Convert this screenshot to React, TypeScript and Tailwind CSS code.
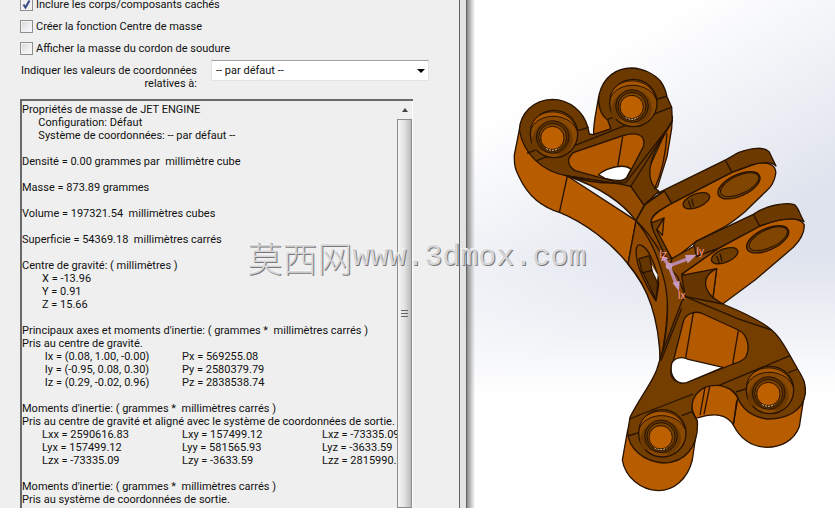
import { useState } from "react";

const options = [
  { id: "hidden", label: "Inclure les corps/composants cachés", on: true },
  { id: "center", label: "Créer la fonction Centre de masse", on: false },
  { id: "weld", label: "Afficher la masse du cordon de soudure", on: false },
];

const report = [
  "Propriétés de masse de JET ENGINE",
  "      Configuration: Défaut",
  "      Système de coordonnées: -- par défaut --",
  "",
  "Densité = 0.00 grammes par  millimètre cube",
  "",
  "Masse = 873.89 grammes",
  "",
  "Volume = 197321.54  millimètres cubes",
  "",
  "Superficie = 54369.18  millimètres carrés",
  "",
  "Centre de gravité: ( millimètres )",
  "\tX = -13.96",
  "\tY = 0.91",
  "\tZ = 15.66",
  "",
  "Principaux axes et moments d'inertie: ( grammes *  millimètres carrés )",
  "Pris au centre de gravité.",
  "\t Ix = (0.08, 1.00, -0.00)\t\tPx = 569255.08",
  "\t Iy = (-0.95, 0.08, 0.30)\t\tPy = 2580379.79",
  "\t Iz = (0.29, -0.02, 0.96)\t\tPz = 2838538.74",
  "",
  "Moments d'inertie: ( grammes *  millimètres carrés )",
  "Pris au centre de gravité et aligné avec le système de coordonnées de sortie.",
  "\tLxx = 2590616.83\t\t\tLxy = 157499.12\t\t\tLxz = -73335.09",
  "\tLyx = 157499.12\t\t\tLyy = 581565.93\t\t\tLyz = -3633.59",
  "\tLzx = -73335.09\t\t\t\tLzy = -3633.59\t\t\t\tLzz = 2815990.26",
  "",
  "Moments d'inertie: ( grammes *  millimètres carrés )",
  "Pris au système de coordonnées de sortie.",
  "\tIxx = 2885507.20\t\t\tIxy = 148303.48\t\t\tIxz = -264374.15",
].join("\n");

const bores = [
  [292, 414],
  [530, 321],
  [940, 1182],
  [617, 1312],
];

function Bore({ x, y }: { x: number; y: number }) {
  return (
    <g transform={`translate(${x} ${y})`} strokeWidth="3">
      <circle cx="5" cy="-12" r="71" fill="#8a4900" strokeWidth="4" />
      <path d="M-64 -28 C-56 -92 52 -100 74 -24 C50 -76 -38 -80 -64 -28Z" fill="#a85500" />
      <path d="M-56 34 C-72 0 -50 -36 -20 -46 C30 -62 66 -30 60 14 C54 36 40 46 28 52Z" fill="#6c3900" stroke="none" />
      <circle cx="1" cy="-3" r="49" fill="#5f3300" />
      <circle cx="1" cy="-2" r="42" fill="#7a4200" />
      <circle r="35" fill="#bc6000" />
      <path d="M-18 32 Q0 42 18 32" stroke="#e8dcc8" strokeDasharray="5 4" fill="none" />
    </g>
  );
}

function Bracket() {
  return (
    <svg
      viewBox="36 0 1104 1524"
      className="h-full w-full"
      fill="none"
      stroke="#271300"
      strokeWidth="4"
      strokeLinejoin="round"
      role="img"
      aria-label="JET ENGINE"
    >
      {/* upper arm */}
      <path fill="#b85c00" d="M193 390 L178 465 C177 500 182 510 192 530 C220 590 260 620 315 638 C390 668 470 730 519 792 C575 862 605 935 612 1000 L616 1090 L650 1000 L640 800 L543 662 L337 528Z" />
      <path fill="#b05800" d="M431 290 C425 330 414 370 416 403 L468 388 L460 350Z" />
      <path fill="#b05800" d="M652 350 L650 385 L636 470 L608 560 L596 570 L575 520Z" />
      <path fill="#6c3900" d="M193 390 C196 340 235 299 292 298 C345 299 385 335 398 380 L403 402 L416 404 L468 386 L458 360 C436 345 428 315 432 285 C445 230 485 204 530 204 C565 205 598 222 616 243 C630 262 634 280 636 290 L650 322 L652 362 C635 400 592 450 585 505 C582 535 592 560 612 574 L567 616 L528 560 L500 553 L337 528 C260 515 205 460 193 390Z" />
      <path fill="#924b00" d="M337 528 L500 553 L528 560 L567 616 L543 662 C500 605 430 560 337 528Z" />
      <path d="M245 482 L648 322 M216 460 L268 439 M369 392 L401 382 M606 298 L636 288 M458 358 L480 350 M652 362 L528 558 M640 382 L512 548 M337 528 C390 545 450 552 512 548 M337 528 L313 638 M543 662 L519 792 M636 400 Q630 500 598 568" />
      <path fill="#b35900" d="M355 458 L500 408 C545 393 573 405 566 438 L518 530 C508 548 480 545 455 538 L360 512 C335 495 335 475 355 458Z" />
      <path fill="#fff" d="M430 524 C460 500 510 490 528 508 L515 532 C503 546 475 542 450 535Z" />
      <path d="M503 410 L488 500" />

      {/* rear lug */}
      <path fill="#b85c00" d="M588 665 C590 645 620 628 650 610 L830 517 L905 490 C945 483 965 500 962 522 C958 545 950 560 935 572 L870 635 C840 660 820 675 800 685 L722 725 L660 775 L630 780Z" />
      <path fill="#6c3900" d="M607 580 L815 478 L850 458 C895 440 930 442 942 455 L963 498 C950 485 920 485 890 495 L830 517 L650 610 L628 575Z" />
      <path fill="#874600" d="M543 662 L575 606 L628 573 L650 610 C610 632 588 645 588 667 L594 690 L652 778 L632 830 C610 750 580 700 543 662Z" />
      <path d="M811 480 L831 517 M567 616 L625 575" />
      <g fill="#6f3c00">
        <ellipse cx="852" cy="556" rx="68" ry="32" transform="rotate(-25 852 556)" />
        <ellipse cx="854" cy="554" rx="62" ry="27" transform="rotate(-25 854 554)" fill="#804500" strokeWidth="3" />
        <ellipse cx="724" cy="602" rx="42" ry="20" transform="rotate(-22 724 602)" />
        <path d="M700 602 L708 623 M710 596 L716 620" />
        <path d="M590 668 L627 654 L605 690 L650 775 L635 778 L594 690Z" />
        <path fill="#a85500" d="M627 654 L622 706 L606 688Z" />
      </g>

      {/* front lug */}
      <path fill="#b85c00" d="M682 822 L790 745 L915 678 C980 652 1035 648 1048 675 C1048 700 1035 722 1015 742 L900 840 L803 912 L760 890Z" />
      <path fill="#6c3900" d="M722 725 L895 643 C930 618 990 605 1018 614 C1030 622 1033 640 1047 665 C1025 652 980 654 915 678 L790 745 L722 770 L716 735Z" />
      <path fill="#874600" d="M652 775 L718 738 L724 770 L790 745 L680 822 L700 905 L625 920 L632 830Z" />
      <path d="M895 643 L915 680" />
      <g fill="#6f3c00">
        <ellipse cx="938" cy="718" rx="68" ry="32" transform="rotate(-25 938 718)" />
        <ellipse cx="940" cy="716" rx="62" ry="27" transform="rotate(-25 940 716)" fill="#804500" strokeWidth="3" />
        <ellipse cx="809" cy="767" rx="42" ry="20" transform="rotate(-22 809 767)" />
        <path d="M785 768 L793 788 M795 761 L801 785" />
      </g>
      <path fill="#653600" d="M680 826 L785 806 L774 893 L803 912 L760 925 L690 890Z" />
      <path fill="#b35900" d="M785 806 C748 822 738 858 774 893Z" />

      {/* spine */}
      <path fill="#914a00" d="M543 662 C600 720 637 800 638 880 C640 960 630 1020 616 1085 C612 960 580 860 519 792Z" />
      <path fill="#804300" d="M543 662 C590 720 608 770 625 830 C645 900 642 980 616 1085 L690 925 L692 890 L668 830 L640 800 C610 740 580 695 543 662Z" />
      <path fill="#874600" d="M545 742 C550 725 572 740 585 765 C603 800 614 840 610 862 L603 903 C580 870 535 790 545 742Z" />
      <path fill="#653600" d="M552 776 L583 767 L592 812 L562 820Z" />
      <path fill="#5b3000" d="M564 818 L592 811 L608 850 L603 900Z" />
      <path fill="#eef0f6" stroke="none" d="M590 794 L608 825 L606 840 L594 815Z" />

      {/* lower plate */}
      <path fill="#b85c00" d="M712 1230 C704 1190 730 1150 775 1150 C820 1150 845 1185 852 1200 L838 1278 C815 1240 780 1238 722 1255Z" />
      <path fill="#b85c00" d="M849 1190 L835 1275 C855 1315 890 1340 935 1342 C975 1342 1015 1325 1033 1280 L1051 1165Z" />
      <path fill="#b85c00" d="M518 1290 L502 1380 C510 1430 555 1470 610 1472 C655 1472 697 1440 712 1380 L727 1275Z" />
      <path fill="#743e00" d="M692 890 L803 912 C860 935 915 960 950 990 C975 1010 990 1040 1005 1067 L1028 1107 C1048 1140 1052 1150 1051 1180 C1045 1230 1000 1258 935 1257 C890 1250 860 1225 848 1192 C835 1162 790 1148 750 1162 C715 1180 708 1210 712 1237 L727 1262 C732 1340 690 1388 625 1389 C565 1385 520 1345 518 1295 L525 1252 C550 1200 590 1150 605 1110 L620 1062 L680 905Z" />
      <path d="M525 1257 L560 1242 L715 1182 M518 1308 L552 1298 M680 1247 L712 1235 M790 1157 L1005 1067 M1000 1118 L1028 1107 M843 1176 L875 1166 M750 1162 L735 1245 M764 1160 L747 1243 M845 1202 L835 1275 M692 890 C740 912 800 935 845 955 L950 990 M680 925 L618 1082" />
      <path fill="#b35900" d="M685 965 C690 940 725 930 745 942 L850 990 C880 1005 886 1045 872 1072 C860 1085 850 1087 835 1092 L700 1145 C670 1155 645 1140 648 1110Z" />
      <path fill="#fff" d="M650 1090 C660 1070 685 1070 700 1078 L804 1102 L695 1148 C665 1155 642 1130 650 1090Z" />
      <path d="M715 938 L692 1073 M850 992 L833 1092" />

      {bores.map(([x, y]) => (
        <Bore key={x} x={x} y={y} />
      ))}

      {/* principal axes */}
      <g stroke="#b987a8" strokeWidth="10" strokeLinecap="round">
        <path d="M642 798 L700 776 M642 798 L662 848 M642 798 L630 780" />
        <g fill="#c79bbd" stroke="none">
          <path d="M690 765 L725 764 L698 790Z" />
          <path d="M652 848 L674 842 L672 874Z" />
          <path d="M618 784 L622 768 L642 776Z" />
          <circle cx="642" cy="798" r="10" />
        </g>
      </g>
      <g fill="#ff9a9a" stroke="none" fontSize="30" fontFamily="Liberation Sans, sans-serif">
        <text x="613" y="774">Iz</text>
        <text x="724" y="766">Iy</text>
        <text x="668" y="897">Ix</text>
      </g>
    </svg>
  );
}

export default function App() {
  const [checked, setChecked] = useState(options.map((o) => o.on));

  return (
    <div className="h-screen overflow-hidden bg-white pb-2 font-[Roboto,sans-serif] text-[11px] leading-[13px] text-[#111]">
      <div className="relative grid h-full grid-cols-[467fr_368fr] overflow-hidden">
        <div className="flex min-h-0 min-w-0 bg-[#efefef]">
          <div className="-mt-[7px] flex min-w-0 flex-1 flex-col pl-5">
            {options.map((o, i) => (
              <div key={o.id} className="flex h-[22px] shrink-0 items-center gap-[3px]">
                <input
                  id={o.id}
                  type="checkbox"
                  checked={checked[i]}
                  onChange={() => setChecked(checked.map((c, j) => (j === i ? !c : c)))}
                  className="h-[13px] w-[13px] appearance-none border border-[#8e8f8f] bg-gradient-to-br from-[#d5d8dc] to-white shadow-[inset_0_0_0_1px_#f4f4f4] checked:bg-[url('data:image/svg+xml,%3Csvg%20xmlns=%22http://www.w3.org/2000/svg%22%20viewBox=%220%200%2011%2011%22%3E%3Cpath%20d=%22M2.5%205.5L4.5%208.5L8.5%201.5%22%20fill=%22none%22%20stroke=%22%23354a88%22%20stroke-width=%222%22/%3E%3C/svg%3E')]"
                />
                <label htmlFor={o.id}>{o.label}</label>
              </div>
            ))}

            <div className="mt-px flex shrink-0 items-start pr-[30px]">
              <label htmlFor="coords" className="w-[177px] shrink-0 pt-1 text-right">
                Indiquer les valeurs de coordonnées relatives à:
              </label>
              <div className="relative ml-[14px] min-w-0 flex-1">
                <select
                  id="coords"
                  className="h-[21px] w-full appearance-none border border-[#e3e3e3] border-t-[#a0a0a0] bg-white pl-1"
                >
                  <option>-- par défaut --</option>
                </select>
                <svg viewBox="0 0 8 4" className="pointer-events-none absolute top-[9px] right-1 h-1 w-2">
                  <path d="M0 0H8L4 4Z" fill="#000" />
                </svg>
              </div>
            </div>

            <div className="mt-[9px] mr-[46px] flex min-h-0 flex-1 border-t-2 border-l-2 border-[#696969]">
              <textarea
                readOnly
                wrap="off"
                aria-label="Propriétés de masse"
                defaultValue={report}
                className="min-w-0 flex-1 resize-none overflow-hidden pt-0.5 whitespace-pre [tab-size:20px] outline-none"
              />
              <div className="flex w-4 shrink-0 flex-col border-r border-white">
                <button aria-label="Défiler vers le haut" className="flex h-[18px] items-center justify-center">
                  <svg viewBox="0 0 6 4" className="h-1 w-[6px]">
                    <path d="M0 4H6L3 0Z" fill="#444" />
                  </svg>
                </button>
                <div className="flex flex-1 items-center justify-center border border-[#8c8c8c] bg-gradient-to-r from-[#f4f4f4] via-[#e2e2e2] to-[#b9b9b9]">
                  <svg viewBox="0 0 7 8" className="h-2 w-[7px]">
                    <path d="M0 .5H7M0 3.5H7M0 6.5H7" stroke="#666" />
                  </svg>
                </div>
              </div>
            </div>
          </div>
          <div className="w-2 shrink-0 border-x border-[#626262] bg-[#e4e4e4]" />
        </div>

        <div className="relative min-h-0 min-w-0 bg-[linear-gradient(to_right,#8b8b8b,transparent_8px),linear-gradient(to_bottom,transparent_50%,#fff_78%),linear-gradient(150deg,#fff_18%,#dfe3ed_55%)]">
          <Bracket />
        </div>

        <div className="pointer-events-none absolute top-[237px] left-[29.6%] flex items-center leading-10 whitespace-nowrap text-[#d6d6d9] [text-shadow:1px_1px_0_#777,-1px_-1px_0_#f4f4f4]">
          <span className="font-['Noto_Sans_CJK_SC',sans-serif] text-[35px] font-light">莫西网</span>
          <span className="font-['Liberation_Mono',monospace] text-[30px]">www.3dmox.com</span>
        </div>
      </div>
    </div>
  );
}
